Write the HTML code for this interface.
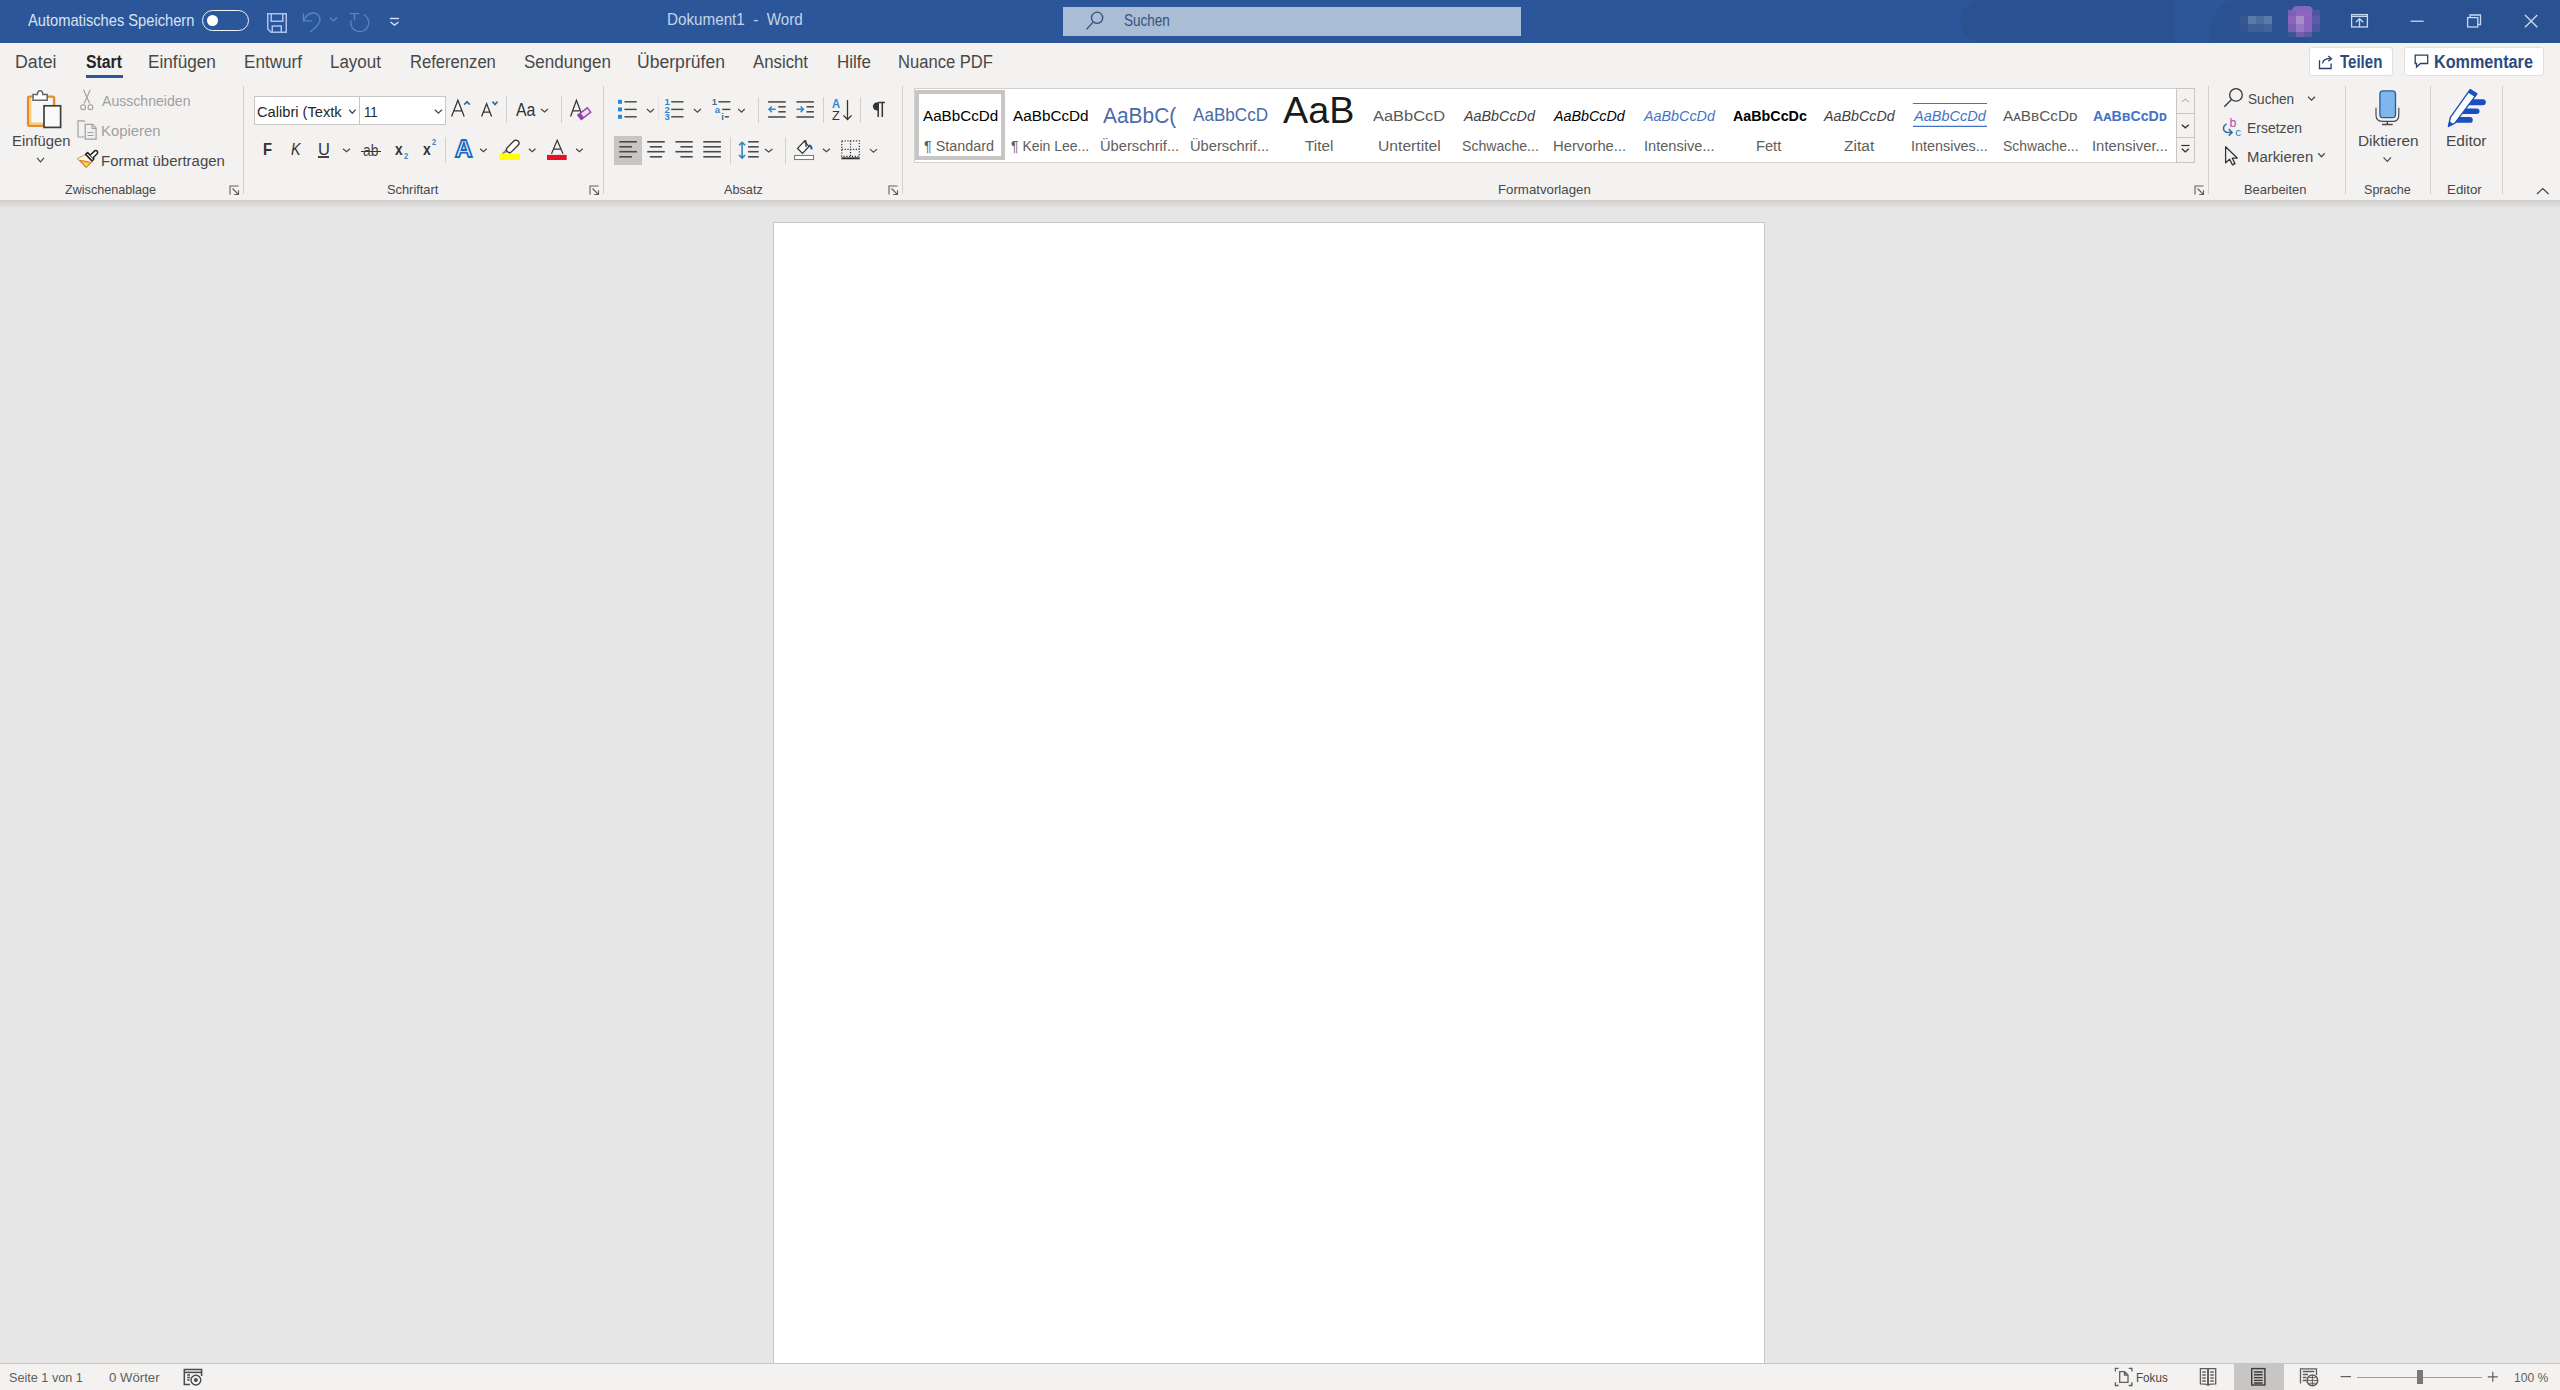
<!DOCTYPE html>
<html><head><meta charset="utf-8"><title>Dokument1 - Word</title>
<style>
html,body{margin:0;padding:0;}
body{width:2560px;height:1390px;overflow:hidden;position:relative;background:#E6E6E6;font-family:"Liberation Sans",sans-serif;}
.t{position:absolute;white-space:pre;line-height:1;}
svg{overflow:visible}
</style></head><body>
<div style="position:absolute;left:0px;top:0px;width:2560px;height:43px;background:#2B579A"></div>
<div style="position:absolute;left:1960px;top:0px;width:215px;height:43px;background:#2A4F88;border-radius:40px 0 0 40px;opacity:.55"></div>
<div style="position:absolute;left:2210px;top:0px;width:350px;height:43px;background:#2A4F88;border-radius:30px 0 0 0;opacity:.55"></div>
<div style="position:absolute;left:0px;top:43px;width:2560px;height:157px;background:#F3F2F1"></div>
<div style="position:absolute;left:0px;top:200px;width:2560px;height:8px;background:linear-gradient(#D0CECC,#E6E6E6)"></div>
<div style="position:absolute;left:773px;top:222px;width:992px;height:1200px;background:#fff;border:1px solid #C6C6C6;box-sizing:border-box"></div>
<div style="position:absolute;left:0px;top:1363px;width:2560px;height:1px;background:#C8C6C4"></div>
<div style="position:absolute;left:0px;top:1364px;width:2560px;height:26px;background:#F3F2F1"></div>
<div style="position:absolute;left:202px;top:10px;width:47px;height:21px;border:1.6px solid #F0F4FA;border-radius:11px;box-sizing:border-box"></div>
<div style="position:absolute;left:207px;top:15px;width:11px;height:11px;background:#FFFFFF;border-radius:50%"></div>
<svg style="position:absolute;left:266px;top:12px" width="22" height="22" viewBox="0 0 22 22"><g fill="none" stroke="#A9C3EE" stroke-width="1.5"><path d="M1.75 1.75H20.25V20.25H5L1.75 17Z"/><path d="M5.25 1.75V9.25H16.75V1.75"/><path d="M6.25 20.25V14H15.25V20.25"/></g></svg>
<svg style="position:absolute;left:300px;top:10px" width="24" height="26" viewBox="0 0 24 26"><g fill="none" stroke="#5A86C6" stroke-width="1.3"><path d="M3.5 3.5V10.8H11.5"/><path d="M4 10.3C6 5.5 10 3 13.5 3C17 3 20 5.8 20 9.5C20 13 17 17 10 22"/></g></svg>
<svg style="position:absolute;left:328px;top:15px" width="10" height="8" viewBox="0 0 10 8"><path d="M2 2.5L5.5 6L9 2.5" fill="none" stroke="#5A86C6" stroke-width="1.2"/></svg>
<svg style="position:absolute;left:348px;top:12px" width="24" height="24" viewBox="0 0 24 24"><g fill="none" stroke="#5A86C6" stroke-width="1.3"><path d="M15.5 2.5A9 9 0 1 1 3 8.5"/><path d="M1.7 1.7H11.2M6.5 1.7V8.3"/></g></svg>
<svg style="position:absolute;left:388px;top:16px" width="12" height="11" viewBox="0 0 12 11"><g fill="none" stroke="#D5E2F7" stroke-width="1.4"><path d="M1.9 2.5H10.9"/><path d="M2.5 6L6.5 9L10.5 6"/></g></svg>
<div style="position:absolute;left:1063px;top:7px;width:458px;height:29px;background:#A9BDD5"></div>
<svg style="position:absolute;left:1084px;top:10px" width="22" height="22" viewBox="0 0 22 22"><g fill="none" stroke="#2F4D7A" stroke-width="1.3"><circle cx="13.1" cy="7.8" r="5.6"/><path d="M8.9 12.4L2.5 19.4"/></g></svg>
<div style="position:absolute;left:2240px;top:16px;width:8px;height:8px;background:#36588F"></div>
<div style="position:absolute;left:2248px;top:16px;width:8px;height:8px;background:#5A7BA8"></div>
<div style="position:absolute;left:2256px;top:16px;width:8px;height:8px;background:#4E6D9E"></div>
<div style="position:absolute;left:2264px;top:16px;width:8px;height:8px;background:#5A7BA8"></div>
<div style="position:absolute;left:2240px;top:24px;width:8px;height:8px;background:#2F5690"></div>
<div style="position:absolute;left:2248px;top:24px;width:8px;height:8px;background:#40609A"></div>
<div style="position:absolute;left:2256px;top:24px;width:8px;height:8px;background:#3E5F94"></div>
<div style="position:absolute;left:2264px;top:24px;width:8px;height:8px;background:#40649A"></div>
<div style="position:absolute;left:2288px;top:10px;width:8px;height:6px;background:#7862B2"></div>
<div style="position:absolute;left:2296px;top:10px;width:8px;height:6px;background:#8E66C0"></div>
<div style="position:absolute;left:2304px;top:10px;width:8px;height:6px;background:#8E66C0"></div>
<div style="position:absolute;left:2312px;top:10px;width:8px;height:6px;background:#47589E"></div>
<div style="position:absolute;left:2288px;top:16px;width:8px;height:8px;background:#8C63BE"></div>
<div style="position:absolute;left:2296px;top:16px;width:8px;height:8px;background:#A78DCA"></div>
<div style="position:absolute;left:2304px;top:16px;width:8px;height:8px;background:#8C63BE"></div>
<div style="position:absolute;left:2312px;top:16px;width:8px;height:8px;background:#5E5CA6"></div>
<div style="position:absolute;left:2288px;top:24px;width:8px;height:8px;background:#7C60B6"></div>
<div style="position:absolute;left:2296px;top:24px;width:8px;height:8px;background:#9478C4"></div>
<div style="position:absolute;left:2304px;top:24px;width:8px;height:8px;background:#8A64BE"></div>
<div style="position:absolute;left:2312px;top:24px;width:8px;height:8px;background:#4E589E"></div>
<div style="position:absolute;left:2288px;top:32px;width:8px;height:5px;background:#3E5598"></div>
<div style="position:absolute;left:2296px;top:32px;width:8px;height:5px;background:#6E60AC"></div>
<div style="position:absolute;left:2304px;top:32px;width:8px;height:5px;background:#5A5CA2"></div>
<div style="position:absolute;left:2292px;top:6px;width:21px;height:5px;background:#8466BE;border-radius:10px 10px 0 0"></div>
<svg style="position:absolute;left:2350px;top:13px" width="20" height="16" viewBox="0 0 20 16"><g fill="none" stroke="#C9D8F0" stroke-width="1.3"><rect x="1.6" y="1.6" width="15.8" height="12.4"/><path d="M1.6 3.4H17.4"/><path d="M9.5 14V5.6M5.8 9.3L9.5 5.6L13.2 9.3"/></g></svg>
<svg style="position:absolute;left:2408px;top:18px" width="18" height="6" viewBox="0 0 18 6"><path d="M2.5 3.2H15.7" stroke="#C9D8F0" stroke-width="1.3"/></svg>
<svg style="position:absolute;left:2465px;top:13px" width="18" height="16" viewBox="0 0 18 16"><g fill="none" stroke="#C9D8F0" stroke-width="1.3"><rect x="2.6" y="4.6" width="10.2" height="9.4"/><path d="M5 4.6V2H15.5V11.5H12.8"/></g></svg>
<svg style="position:absolute;left:2523px;top:13px" width="17" height="17" viewBox="0 0 17 17"><path d="M2 2L14.3 14.3M14.3 2L2 14.3" stroke="#C9D8F0" stroke-width="1.4"/></svg>
<div style="position:absolute;left:86px;top:75px;width:37px;height:3px;background:#2B579A"></div>
<div style="position:absolute;left:2309px;top:47px;width:84px;height:29px;background:#fff;border:1px solid #E1DFDD;box-sizing:border-box;border-radius:3px"></div>
<div style="position:absolute;left:2404px;top:47px;width:140px;height:29px;background:#fff;border:1px solid #E1DFDD;box-sizing:border-box;border-radius:3px"></div>
<svg style="position:absolute;left:2317px;top:54px" width="18" height="18" viewBox="0 0 18 18"><g fill="none" stroke="#2B3F6A" stroke-width="1.3"><path d="M2.5 6.2V14.5H14.1V9.5"/><path d="M5.5 9.5C6 6 9 4.5 13.5 4.6"/><path d="M11.3 2L14.5 4.7L11.3 7.3"/></g></svg>
<svg style="position:absolute;left:2413px;top:53px" width="18" height="18" viewBox="0 0 18 18"><g fill="none" stroke="#2B3F6A" stroke-width="1.3"><path d="M2.2 2.2H14.7V10.5H7.5L3.5 14V10.5H2.2Z"/></g></svg>
<svg style="position:absolute;left:25px;top:88px" width="40" height="42" viewBox="0 0 40 42">
<rect x="3.1" y="8.6" width="26" height="29.2" rx="1.5" fill="#F7F7F7" stroke="#E8892A" stroke-width="2.4"/>
<path d="M5.4 10.5V35.6H27" fill="none" stroke="#F9C97A" stroke-width="2"/>
<path d="M8 12.2V6.6H12.4C12.4 4.3 13.6 2.7 15.1 2.7C16.6 2.7 17.8 4.3 17.8 6.6H22.2V12.2Z" fill="#FFFFFF" stroke="#666" stroke-width="1.5"/>
<rect x="19" y="17.8" width="16.6" height="21.6" fill="#FAFAFA" stroke="#3F3F3F" stroke-width="1.7"/>
</svg>
<svg style="position:absolute;left:35px;top:155px" width="11" height="8" viewBox="0 0 11 8"><path d="M2.00 2.80L5.50 6.80L9.00 2.80" fill="none" stroke="#484848" stroke-width="1.2"/></svg>
<svg style="position:absolute;left:78px;top:88px" width="18" height="24" viewBox="0 0 18 24"><g fill="none" stroke="#A19F9D" stroke-width="1.1"><path d="M5.5 1.7L11.7 15.5M12.3 1.7L6.1 15.5"/><circle cx="5.1" cy="19.2" r="2.4"/><circle cx="12.5" cy="19.2" r="2.4"/></g></svg>
<svg style="position:absolute;left:76px;top:119px" width="22" height="22" viewBox="0 0 22 22"><g fill="none" stroke="#A19F9D" stroke-width="1.2"><path d="M8.5 18H2V1.8H7.6L9 3.2"/><path d="M9.2 20.1V5.4H16.6L20.1 8.9V20.1Z" fill="#F0F0F0"/><path d="M16.2 5.4V9.3H20.1"/><path d="M11.5 13.5H17.5M11.5 16.5H17.5"/></g></svg>
<svg style="position:absolute;left:74px;top:146px" width="26" height="26" viewBox="0 0 26 26">
<path d="M11.6 8.6L3.3 12.7L12.2 21.6L18.4 15.3Z" fill="#FFF6E0" stroke="#C98A3A" stroke-width="0.9" stroke-linejoin="round"/>
<path d="M5.6 14.2C9 15 14 15.5 17.2 16.5L12.2 21.6Z" fill="#F6B73C" stroke="#E2761B" stroke-width="1"/>
<path d="M9 16.8L14.8 17.4L12.4 19.8Z" fill="#FFE066"/>
<path d="M11.6 8.4L13.6 6.6L19.9 12.9L18 14.9Z" fill="#fff" stroke="#222" stroke-width="1.5" stroke-linejoin="round"/>
<path d="M16.2 9.3L20.4 5.1C21.2 4.3 22.4 4.3 23.1 5.1C23.8 5.8 23.8 7 23.1 7.7L18.9 12" fill="#fff" stroke="#222" stroke-width="1.5" stroke-linejoin="round"/>
</svg>
<svg style="position:absolute;left:229px;top:185px" width="11" height="11" viewBox="0 0 11 11"><g fill="none" stroke="#605E5C" stroke-width="1.1"><path d="M1 9.5V1H9.5"/><path d="M3.5 3.5L9.5 9.5M5.2 9.5H9.5V5.2"/></g></svg>
<div style="position:absolute;left:243px;top:86px;width:1px;height:108px;background:#D2D0CE"></div>
<div style="position:absolute;left:254px;top:96px;width:106px;height:29px;background:#fff;border:1px solid #C8C6C4;box-sizing:border-box"></div>
<div style="position:absolute;left:359px;top:96px;width:87px;height:29px;background:#fff;border:1px solid #C8C6C4;box-sizing:border-box"></div>
<svg style="position:absolute;left:347px;top:107px" width="10" height="7" viewBox="0 0 10 7"><path d="M2.05 2.75L5.30 6.25L8.55 2.75" fill="none" stroke="#484848" stroke-width="1.2"/></svg>
<svg style="position:absolute;left:432px;top:107px" width="11" height="7" viewBox="0 0 11 7"><path d="M2.90 2.75L6.40 6.25L9.90 2.75" fill="none" stroke="#484848" stroke-width="1.2"/></svg>
<svg style="position:absolute;left:449px;top:98px" width="24" height="20" viewBox="0 0 24 20"><g fill="none" stroke="#333" stroke-width="1.25"><path d="M2.6 18.5L8.9 2.2L15.2 18.5M5 12.8H12.8"/></g><path d="M15.2 6.6L18 3.8L20.8 6.6" fill="none" stroke="#3E6E94" stroke-width="1.7"/></svg>
<svg style="position:absolute;left:479px;top:101px" width="22" height="17" viewBox="0 0 22 17"><g fill="none" stroke="#333" stroke-width="1.25"><path d="M2.6 15.5L7.6 2.8L12.6 15.5M4.5 11H10.7"/></g><path d="M13.4 0.6L16 3.4L18.6 0.6" fill="none" stroke="#3E6E94" stroke-width="1.7"/></svg>
<div style="position:absolute;left:506px;top:96px;width:1px;height:27px;background:#D2D0CE"></div>
<svg style="position:absolute;left:539px;top:107px" width="11" height="7" viewBox="0 0 11 7"><path d="M2.00 2.00L5.50 5.00L9.00 2.00" fill="none" stroke="#484848" stroke-width="1.2"/></svg>
<div style="position:absolute;left:561px;top:96px;width:1px;height:27px;background:#D2D0CE"></div>
<svg style="position:absolute;left:568px;top:98px" width="24" height="24" viewBox="0 0 24 24"><path d="M2.6 18.5L8.4 2.2L14 17M4.8 12.8H11.5" fill="none" stroke="#333" stroke-width="1.25"/><g transform="rotate(-38 16 15.8)"><rect x="10.3" y="13.1" width="12" height="5.6" fill="#F0DDF7" stroke="#8E44AD" stroke-width="1.4"/><rect x="10.3" y="13.1" width="3.4" height="5.6" fill="#8E44AD"/></g></svg>
<div style="position:absolute;left:318px;top:156px;width:11px;height:1.6px;background:#444"></div>
<svg style="position:absolute;left:341px;top:146px" width="11" height="7" viewBox="0 0 11 7"><path d="M2.00 2.80L5.50 5.80L9.00 2.80" fill="none" stroke="#484848" stroke-width="1.2"/></svg>
<div style="position:absolute;left:361px;top:151px;width:20px;height:1.3px;background:#333"></div>
<div style="position:absolute;left:445px;top:137px;width:1px;height:26px;background:#D2D0CE"></div>
<svg style="position:absolute;left:478px;top:146px" width="10" height="7" viewBox="0 0 10 7"><path d="M2.05 2.80L5.40 5.80L8.75 2.80" fill="none" stroke="#484848" stroke-width="1.2"/></svg>
<svg style="position:absolute;left:498px;top:138px" width="24" height="24" viewBox="0 0 24 24"><path d="M3.6 15.6L9.6 9.8L12.6 12.8L5.5 15.8Z" fill="#8A8886" /><g transform="rotate(45 14.6 8.5)"><rect x="11.6" y="0.8" width="6" height="15" rx="3" fill="#fff" stroke="#333" stroke-width="1.3"/></g><rect x="1.8" y="16" width="20.2" height="6" fill="#FFFF00"/></svg>
<svg style="position:absolute;left:526px;top:146px" width="10" height="7" viewBox="0 0 10 7"><path d="M2.85 2.80L6.20 5.80L9.55 2.80" fill="none" stroke="#484848" stroke-width="1.2"/></svg>
<svg style="position:absolute;left:545px;top:138px" width="24" height="24" viewBox="0 0 24 24"><path d="M6.5 15.7L12.2 2.2L18 15.7M8.5 11.2H16" fill="none" stroke="#333" stroke-width="1.2"/><rect x="2" y="16.9" width="19.7" height="5.1" fill="#E81123"/></svg>
<svg style="position:absolute;left:574px;top:146px" width="10" height="7" viewBox="0 0 10 7"><path d="M2.05 2.80L5.40 5.80L8.75 2.80" fill="none" stroke="#484848" stroke-width="1.2"/></svg>
<svg style="position:absolute;left:589px;top:185px" width="11" height="11" viewBox="0 0 11 11"><g fill="none" stroke="#605E5C" stroke-width="1.1"><path d="M1 9.5V1H9.5"/><path d="M3.5 3.5L9.5 9.5M5.2 9.5H9.5V5.2"/></g></svg>
<div style="position:absolute;left:603px;top:86px;width:1px;height:108px;background:#D2D0CE"></div>
<svg style="position:absolute;left:0px;top:0px" width="2560" height="200" viewBox="0 0 2560 200"><rect x="618" y="99.8" width="4" height="4" fill="#1E88E5"/><rect x="618" y="107.4" width="4" height="4" fill="#1E88E5"/><rect x="618" y="114.8" width="4" height="4" fill="#1E88E5"/><g stroke="#444" stroke-width="1.4" fill="none"><path d="M624.4 101.8H636.7"/><path d="M624.4 109.4H636.7"/><path d="M624.4 116.8H636.7"/></g></svg>
<svg style="position:absolute;left:644px;top:107px" width="11" height="7" viewBox="0 0 11 7"><path d="M2.90 2.00L6.40 5.20L9.90 2.00" fill="none" stroke="#484848" stroke-width="1.2"/></svg>
<div style="position:absolute;left:658px;top:98px;width:1px;height:23px;background:#E6E4E2"></div>
<svg style="position:absolute;left:0px;top:0px" width="2560" height="200" viewBox="0 0 2560 200"><g stroke="#444" stroke-width="1.4" fill="none"><path d="M671.2 101.8H683.5"/><path d="M671.2 109.4H683.5"/><path d="M671.2 116.8H683.5"/></g><text x="664.5" y="105.39999999999999" font-family="Liberation Sans" font-size="9.5" font-weight="bold" fill="#2E86C9">1</text><text x="664.5" y="113.0" font-family="Liberation Sans" font-size="9.5" font-weight="bold" fill="#2E86C9">2</text><text x="664.5" y="120.39999999999999" font-family="Liberation Sans" font-size="9.5" font-weight="bold" fill="#2E86C9">3</text></svg>
<svg style="position:absolute;left:691px;top:107px" width="11" height="7" viewBox="0 0 11 7"><path d="M2.90 2.00L6.40 5.20L9.90 2.00" fill="none" stroke="#484848" stroke-width="1.2"/></svg>
<svg style="position:absolute;left:0px;top:0px" width="2560" height="200" viewBox="0 0 2560 200"><g stroke="#444" stroke-width="1.4" fill="none"><path d="M718.4 101.8H730.4"/><path d="M722.2 109.4H730.4"/><path d="M724.8 116.8H728.9"/></g><text x="711.8" y="105.4" font-family="Liberation Sans" font-size="9.5" font-weight="bold" fill="#3F6F8F">1</text><text x="714.8" y="113" font-family="Liberation Sans" font-size="9.5" font-weight="bold" fill="#2E86C9">a</text><text x="721.2" y="120.4" font-family="Liberation Sans" font-size="9.5" font-weight="bold" fill="#3F6F8F">i</text></svg>
<svg style="position:absolute;left:736px;top:107px" width="10" height="7" viewBox="0 0 10 7"><path d="M2.25 2.00L5.50 5.20L8.75 2.00" fill="none" stroke="#484848" stroke-width="1.2"/></svg>
<div style="position:absolute;left:758px;top:97px;width:1px;height:26px;background:#D2D0CE"></div>
<svg style="position:absolute;left:0px;top:0px" width="2560" height="200" viewBox="0 0 2560 200"><g stroke="#444" stroke-width="1.5" fill="none"><path d="M768.1 101.9H785.7"/><path d="M778.3 106.8H785.7"/><path d="M778.3 111.8H785.7"/><path d="M768.1 117H785.7"/></g><g stroke="#2B88D8" stroke-width="1.5" fill="none"><path d="M769 109.3H775.6M771.8 106.5L769 109.3L771.8 112.1"/></g></svg>
<svg style="position:absolute;left:0px;top:0px" width="2560" height="200" viewBox="0 0 2560 200"><g stroke="#444" stroke-width="1.5" fill="none"><path d="M796.4 101.9H813.9"/><path d="M806.5 106.8H813.9"/><path d="M806.5 111.8H813.9"/><path d="M796.4 117H813.9"/></g><g stroke="#2B88D8" stroke-width="1.5" fill="none"><path d="M796.5 109.3H803.4M800.6 106.5L803.4 109.3L800.6 112.1"/></g></svg>
<div style="position:absolute;left:823px;top:97px;width:1px;height:26px;background:#D2D0CE"></div>
<svg style="position:absolute;left:0px;top:0px" width="2560" height="200" viewBox="0 0 2560 200"><g stroke="#333" stroke-width="1.3" fill="none"><path d="M847.5 100V119.3M843.4 115.4L847.5 119.5L851.6 115.4"/></g></svg>
<div style="position:absolute;left:860px;top:97px;width:1px;height:26px;background:#D2D0CE"></div>
<svg style="position:absolute;left:0px;top:0px" width="2560" height="200" viewBox="0 0 2560 200"><path d="M878.5 102.6H884.8M878.2 102.6V117M882.3 102.6V117" stroke="#333" stroke-width="1.5" fill="none"/><path d="M878.5 102.3C874.5 102.3 872.9 104.4 872.9 106.6C872.9 108.9 874.7 110.7 878.5 110.7Z" fill="#333"/></svg>
<div style="position:absolute;left:614px;top:136px;width:28px;height:28.5px;background:#C8C6C4"></div>
<svg style="position:absolute;left:0px;top:0px" width="2560" height="200" viewBox="0 0 2560 200"><g stroke="#4A4A4A" stroke-width="1.6" fill="none"><path d="M619.3 141.8H636.9"/><path d="M619.3 146.8H631.9"/><path d="M619.3 151.7H636.9"/><path d="M619.3 156.8H631.9"/></g><g stroke="#4A4A4A" stroke-width="1.6" fill="none"><path d="M647.2 141.8H664.8"/><path d="M649.8 146.8H662.1"/><path d="M647.2 151.7H664.8"/><path d="M649.8 156.8H662.1"/></g><g stroke="#4A4A4A" stroke-width="1.6" fill="none"><path d="M675.4 141.8H692.7"/><path d="M680.4 146.8H692.7"/><path d="M675.4 151.7H692.7"/><path d="M680.4 156.8H692.7"/></g><g stroke="#4A4A4A" stroke-width="1.6" fill="none"><path d="M703.3 141.8H720.9"/><path d="M703.3 146.8H720.9"/><path d="M703.3 151.7H720.9"/><path d="M703.3 156.8H720.9"/></g></svg>
<div style="position:absolute;left:730px;top:137px;width:1px;height:27px;background:#D2D0CE"></div>
<svg style="position:absolute;left:0px;top:0px" width="2560" height="200" viewBox="0 0 2560 200"><g stroke="#4A4A4A" stroke-width="1.6" fill="none"><path d="M748.1 141.8H758.7"/><path d="M748.1 146.8H758.7"/><path d="M748.1 151.7H758.7"/><path d="M748.1 156.8H758.7"/></g><g stroke="#2E86B8" stroke-width="1.6" fill="none"><path d="M742.1 142.5V157.8M739.1 145.3L742.1 142.3L745.1 145.3M739.1 155L742.1 158L745.1 155"/></g></svg>
<svg style="position:absolute;left:762px;top:147px" width="11" height="7" viewBox="0 0 11 7"><path d="M2.95 2.00L6.70 5.00L10.45 2.00" fill="none" stroke="#484848" stroke-width="1.2"/></svg>
<div style="position:absolute;left:785px;top:137px;width:1px;height:27px;background:#D2D0CE"></div>
<svg style="position:absolute;left:0px;top:0px" width="2560" height="200" viewBox="0 0 2560 200"><path d="M797.6 148.4L804.2 141.4L809 146.4L802.5 153.4Z" fill="#fff" stroke="#333" stroke-width="1.3"/><path d="M804 141.6C805 140.2 806 140.5 806 142V147" fill="none" stroke="#333" stroke-width="1.3"/><path d="M809 145.5C810.5 145.5 811.6 146.5 811.6 149.5" fill="none" stroke="#1F5F9A" stroke-width="2"/><rect x="794.6" y="155.4" width="19" height="4.2" fill="#fff" stroke="#666" stroke-width="0.9"/></svg>
<svg style="position:absolute;left:820px;top:146px" width="11" height="7" viewBox="0 0 11 7"><path d="M2.90 2.80L6.40 5.80L9.90 2.80" fill="none" stroke="#484848" stroke-width="1.2"/></svg>
<svg style="position:absolute;left:0px;top:0px" width="2560" height="200" viewBox="0 0 2560 200"><g stroke="#333" stroke-width="1.2" stroke-dasharray="1.2 1.6" fill="none"><rect x="841.8" y="140.8" width="17.5" height="15.5"/><path d="M850.5 140.8V156.3M841.8 149.3H859.3"/></g><path d="M841.4 158.3H859.7" stroke="#333" stroke-width="2"/></svg>
<svg style="position:absolute;left:868px;top:147px" width="11" height="7" viewBox="0 0 11 7"><path d="M2.00 2.10L5.50 5.10L9.00 2.10" fill="none" stroke="#484848" stroke-width="1.2"/></svg>
<svg style="position:absolute;left:888px;top:185px" width="11" height="11" viewBox="0 0 11 11"><g fill="none" stroke="#605E5C" stroke-width="1.1"><path d="M1 9.5V1H9.5"/><path d="M3.5 3.5L9.5 9.5M5.2 9.5H9.5V5.2"/></g></svg>
<div style="position:absolute;left:902px;top:86px;width:1px;height:108px;background:#D2D0CE"></div>
<div style="position:absolute;left:914px;top:88px;width:1263px;height:75px;background:#fff;border:1px solid #D2D0CE;border-right:none;box-sizing:border-box"></div>
<div style="position:absolute;left:914.5px;top:90.3px;width:90px;height:69.4px;border:4.5px solid #C8C6C4;box-sizing:border-box"></div>
<div style="position:absolute;left:2176px;top:88px;width:19px;height:26px;background:#F3F2F1;border:1px solid #C8C6C4;box-sizing:border-box"></div>
<div style="position:absolute;left:2176px;top:113px;width:19px;height:25px;background:#F3F2F1;border:1px solid #C8C6C4;box-sizing:border-box"></div>
<div style="position:absolute;left:2176px;top:137px;width:19px;height:26px;background:#F3F2F1;border:1px solid #C8C6C4;box-sizing:border-box"></div>
<svg style="position:absolute;left:0px;top:0px" width="2560" height="200" viewBox="0 0 2560 200"><path d="M2181.7 101.9L2185.3 99.1L2188.9 101.9" fill="none" stroke="#B3B0AD" stroke-width="1.1"/></svg>
<svg style="position:absolute;left:2179px;top:122px" width="11" height="7" viewBox="0 0 11 7"><path d="M2.80 2.80L6.30 5.80L9.80 2.80" fill="none" stroke="#333" stroke-width="1.4"/></svg>
<svg style="position:absolute;left:0px;top:0px" width="2560" height="200" viewBox="0 0 2560 200"><path d="M2181.3 145.5H2189.6" stroke="#333" stroke-width="1.2"/></svg>
<svg style="position:absolute;left:2179px;top:146px" width="11" height="7" viewBox="0 0 11 7"><path d="M2.80 2.70L6.30 5.90L9.80 2.70" fill="none" stroke="#333" stroke-width="1.4"/></svg>
<svg style="position:absolute;left:0px;top:0px" width="2560" height="200" viewBox="0 0 2560 200"><path d="M1912.9 103.5H1987M1912.9 126.4H1987" stroke="#4472C4" stroke-width="1.1"/></svg>
<svg style="position:absolute;left:2194px;top:185px" width="11" height="11" viewBox="0 0 11 11"><g fill="none" stroke="#605E5C" stroke-width="1.1"><path d="M1 9.5V1H9.5"/><path d="M3.5 3.5L9.5 9.5M5.2 9.5H9.5V5.2"/></g></svg>
<div style="position:absolute;left:2208px;top:86px;width:1px;height:108px;background:#D2D0CE"></div>
<svg style="position:absolute;left:2220px;top:85px" width="26" height="26" viewBox="0 0 26 26"><g fill="none" stroke="#333" stroke-width="1.3"><circle cx="16" cy="9.9" r="6.3"/><path d="M11.5 14.5L4.3 21.8"/></g></svg>
<svg style="position:absolute;left:2306px;top:94px" width="11" height="7" viewBox="0 0 11 7"><path d="M2.00 2.75L5.50 6.25L9.00 2.75" fill="none" stroke="#484848" stroke-width="1.2"/></svg>
<svg style="position:absolute;left:2220px;top:114px" width="26" height="26" viewBox="0 0 26 26"><text x="9.6" y="12.9" font-family="Liberation Sans" font-size="12.3" fill="#9B4FB5">b</text><text x="15.2" y="22.4" font-family="Liberation Sans" font-size="11.5" fill="#2E7EB8">c</text><g fill="none" stroke="#2C6DA6" stroke-width="1.5"><path d="M6.6 9.8C4.3 11 3.3 13.3 3.6 15.3C4 17.3 5.8 18.4 8.5 18.4H12"/><path d="M8.8 15.1L12.1 18.4L8.8 21.7"/></g></svg>
<svg style="position:absolute;left:2222px;top:144px" width="22" height="24" viewBox="0 0 22 24"><path d="M3.6 2.8V18.9L7.6 15.2L10.5 20.9L13 19.6L10.2 14H15.2Z" fill="none" stroke="#333" stroke-width="1.25" stroke-linejoin="round"/></svg>
<svg style="position:absolute;left:2316px;top:151px" width="10" height="7" viewBox="0 0 10 7"><path d="M2.25 2.25L5.50 5.75L8.75 2.25" fill="none" stroke="#484848" stroke-width="1.2"/></svg>
<div style="position:absolute;left:2345px;top:86px;width:1px;height:108px;background:#D2D0CE"></div>
<svg style="position:absolute;left:2372px;top:86px" width="32" height="42" viewBox="0 0 32 42"><rect x="7.9" y="4.9" width="15.6" height="26.8" rx="3.2" fill="#7FB6EB" stroke="#1F5F9F" stroke-width="1.3"/><path d="M4 21.8V29C4 33 6 35.3 10 35.3H21.5C25.5 35.3 26.8 33 26.8 29V21.8" fill="none" stroke="#4A4A4A" stroke-width="1.2"/><path d="M15.3 35.3V38.6M10 38.6H20.7" fill="none" stroke="#4A4A4A" stroke-width="1.5"/></svg>
<svg style="position:absolute;left:2381px;top:155px" width="11" height="8" viewBox="0 0 11 8"><path d="M2.55 2.30L6.30 6.30L10.05 2.30" fill="none" stroke="#484848" stroke-width="1.2"/></svg>
<div style="position:absolute;left:2430px;top:86px;width:1px;height:108px;background:#D2D0CE"></div>
<svg style="position:absolute;left:2442px;top:84px" width="50" height="46" viewBox="0 0 50 46">
<g fill="#1A4FC4"><rect x="24" y="15.2" width="19.8" height="6" rx="3"/><rect x="17" y="24.4" width="20.5" height="5.5" rx="2.75"/><rect x="10" y="33" width="20.8" height="5.8" rx="2.9"/></g>
<path d="M6.4 42.5L8.4 33.4L28.1 5.6L34.9 9.8L12.9 39.1Z" fill="#fff" stroke="#1A4FC4" stroke-width="1.4" stroke-linejoin="round"/>
<path d="M28.1 5.2L35.3 9.6L33.1 12.9L25.9 8.4Z" fill="#1A4FC4"/>
<path d="M6 43L7.3 37L11.6 40.2Z" fill="#1A4FC4"/>
</svg>
<div style="position:absolute;left:2502px;top:86px;width:1px;height:108px;background:#D2D0CE"></div>
<svg style="position:absolute;left:2534px;top:186px" width="18" height="10" viewBox="0 0 18 10"><path d="M3 8L8.8 2.5L14.6 8" fill="none" stroke="#444" stroke-width="1.2"/></svg>
<svg style="position:absolute;left:182px;top:1367px" width="22" height="22" viewBox="0 0 22 22"><g fill="none" stroke="#4A4A4A" stroke-width="1.5"><path d="M8 17.4H2.3V2.4H19.6V9"/><path d="M2.3 5.4H19.6"/><path d="M5.2 8H8M5.2 10.6H8M5.2 13H7.5"/></g><circle cx="13.9" cy="13.1" r="4.9" fill="#F3F2F1" stroke="#4A4A4A" stroke-width="1.4"/><circle cx="13.9" cy="13.1" r="2" fill="#4A4A4A"/></svg>
<svg style="position:absolute;left:2112px;top:1366px" width="24" height="22" viewBox="0 0 24 22"><g fill="none" stroke="#605E5C" stroke-width="1.3"><path d="M3.4 5.5V2.3H6.6M16.7 2.3H19.9V5.5M19.9 16.3V19.5H16.7M6.6 19.5H3.4V16.3"/><path d="M7.7 5.7V16.3H16V9L12.7 5.7Z M12.5 5.7V9.2H16"/></g></svg>
<svg style="position:absolute;left:2197px;top:1366px" width="22" height="22" viewBox="0 0 22 22"><g fill="none" stroke="#605E5C" stroke-width="1.3"><path d="M3.4 2.7H10.7V19C9 17.8 5 17.8 3.4 17.8Z"/><path d="M18.7 2.7H11.4V19C13 17.8 17 17.8 18.7 17.8Z"/><path d="M5.3 6H8.8M5.3 9H8.8M5.3 12H8.8M5.3 15H8.8M13.3 6H16.8M13.3 9H16.8M13.3 12H16.8M13.3 15H16.8"/></g></svg>
<div style="position:absolute;left:2234px;top:1364px;width:50px;height:26px;background:#C8C6C4"></div>
<svg style="position:absolute;left:2248px;top:1366px" width="22" height="22" viewBox="0 0 22 22"><g fill="none" stroke="#3B3A39" stroke-width="1.4"><rect x="3.7" y="2.6" width="13.2" height="16.4"/><path d="M6 6H14.6M6 8.8H14.6M6 11.6H14.6M6 14.4H14.6M6 17H14.6"/></g></svg>
<svg style="position:absolute;left:2298px;top:1366px" width="22" height="22" viewBox="0 0 22 22"><g fill="none" stroke="#605E5C" stroke-width="1.3"><path d="M2.5 17.6V2.8H18.5V9"/><path d="M4.8 5.5H16.3M4.8 8.5H10M4.8 11.5H8.5M4.8 14.5H8.5"/></g><circle cx="14.4" cy="14.4" r="5.3" fill="#F3F2F1" stroke="#605E5C" stroke-width="1.5"/><path d="M14.4 9.1V19.7M9.1 14.4H19.7M11.3 11.6H17.5M11.3 17.2H17.5" stroke="#605E5C" stroke-width="1"/></svg>
<svg style="position:absolute;left:2338px;top:1370px" width="16" height="14" viewBox="0 0 16 14"><path d="M2.6 6.6H13" stroke="#605E5C" stroke-width="1.2"/></svg>
<div style="position:absolute;left:2357px;top:1377px;width:125px;height:1px;background:#A19F9D"></div>
<div style="position:absolute;left:2416.5px;top:1370px;width:6.5px;height:14px;background:#7A7877"></div>
<svg style="position:absolute;left:2485px;top:1369px" width="16" height="16" viewBox="0 0 16 16"><path d="M2.8 7.8H12.8M7.8 2.8V12.8" stroke="#605E5C" stroke-width="1.2"/></svg>
<div class="t" style="left:28.00px;top:11.61px;font-size:17px;color:#D9E2F0;font-weight:normal;font-style:normal;font-family:'Liberation Sans',sans-serif;transform:scaleX(0.8632);transform-origin:0 0;">Automatisches Speichern</div>
<div class="t" style="left:667.11px;top:11.11px;font-size:17px;color:#C5D3E8;font-weight:normal;font-style:normal;font-family:'Liberation Sans',sans-serif;transform:scaleX(0.8946);transform-origin:0 0;">Dokument1  -  Word</div>
<div class="t" style="left:1123.50px;top:12.41px;font-size:17px;color:#34527F;font-weight:normal;font-style:normal;font-family:'Liberation Sans',sans-serif;transform:scaleX(0.7954);transform-origin:0 0;">Suchen</div>
<div class="t" style="left:15.01px;top:52.76px;font-size:18px;color:#484848;font-weight:normal;font-style:normal;font-family:'Liberation Sans',sans-serif;transform:scaleX(0.9870);transform-origin:0 0;">Datei</div>
<div class="t" style="left:86.00px;top:52.76px;font-size:18px;color:#262626;font-weight:bold;font-style:normal;font-family:'Liberation Sans',sans-serif;transform:scaleX(0.8777);transform-origin:0 0;">Start</div>
<div class="t" style="left:148.04px;top:52.76px;font-size:18px;color:#484848;font-weight:normal;font-style:normal;font-family:'Liberation Sans',sans-serif;transform:scaleX(0.9558);transform-origin:0 0;">Einfügen</div>
<div class="t" style="left:244.05px;top:52.76px;font-size:18px;color:#484848;font-weight:normal;font-style:normal;font-family:'Liberation Sans',sans-serif;transform:scaleX(0.9505);transform-origin:0 0;">Entwurf</div>
<div class="t" style="left:330.06px;top:52.76px;font-size:18px;color:#484848;font-weight:normal;font-style:normal;font-family:'Liberation Sans',sans-serif;transform:scaleX(0.9426);transform-origin:0 0;">Layout</div>
<div class="t" style="left:410.08px;top:52.76px;font-size:18px;color:#484848;font-weight:normal;font-style:normal;font-family:'Liberation Sans',sans-serif;transform:scaleX(0.9226);transform-origin:0 0;">Referenzen</div>
<div class="t" style="left:524.00px;top:52.76px;font-size:18px;color:#484848;font-weight:normal;font-style:normal;font-family:'Liberation Sans',sans-serif;transform:scaleX(0.9442);transform-origin:0 0;">Sendungen</div>
<div class="t" style="left:637.02px;top:52.76px;font-size:18px;color:#484848;font-weight:normal;font-style:normal;font-family:'Liberation Sans',sans-serif;transform:scaleX(0.9768);transform-origin:0 0;">Überprüfen</div>
<div class="t" style="left:753.00px;top:52.76px;font-size:18px;color:#484848;font-weight:normal;font-style:normal;font-family:'Liberation Sans',sans-serif;transform:scaleX(0.9318);transform-origin:0 0;">Ansicht</div>
<div class="t" style="left:836.56px;top:52.76px;font-size:18px;color:#484848;font-weight:normal;font-style:normal;font-family:'Liberation Sans',sans-serif;transform:scaleX(0.9429);transform-origin:0 0;">Hilfe</div>
<div class="t" style="left:898.08px;top:52.76px;font-size:18px;color:#484848;font-weight:normal;font-style:normal;font-family:'Liberation Sans',sans-serif;transform:scaleX(0.9211);transform-origin:0 0;">Nuance PDF</div>
<div class="t" style="left:2339.50px;top:52.76px;font-size:18px;color:#2C4A7E;font-weight:bold;font-style:normal;font-family:'Liberation Sans',sans-serif;transform:scaleX(0.8353);transform-origin:0 0;">Teilen</div>
<div class="t" style="left:2433.60px;top:52.76px;font-size:18px;color:#2C4A7E;font-weight:bold;font-style:normal;font-family:'Liberation Sans',sans-serif;transform:scaleX(0.8989);transform-origin:0 0;">Kommentare</div>
<div class="t" style="left:11.53px;top:132.65px;font-size:15.3px;color:#484848;font-weight:normal;font-style:normal;font-family:'Liberation Sans',sans-serif;transform:scaleX(0.9681);transform-origin:0 0;">Einfügen</div>
<div class="t" style="left:102.00px;top:92.65px;font-size:15.3px;color:#A19F9D;font-weight:normal;font-style:normal;font-family:'Liberation Sans',sans-serif;transform:scaleX(0.9206);transform-origin:0 0;">Ausschneiden</div>
<div class="t" style="left:101.03px;top:122.65px;font-size:15.3px;color:#A19F9D;font-weight:normal;font-style:normal;font-family:'Liberation Sans',sans-serif;transform:scaleX(0.9711);transform-origin:0 0;">Kopieren</div>
<div class="t" style="left:101.02px;top:152.65px;font-size:15.3px;color:#484848;font-weight:normal;font-style:normal;font-family:'Liberation Sans',sans-serif;transform:scaleX(0.9778);transform-origin:0 0;">Format übertragen</div>
<div class="t" style="left:65.00px;top:183.56px;font-size:12.8px;color:#484848;font-weight:normal;font-style:normal;font-family:'Liberation Sans',sans-serif;transform:scaleX(0.9853);transform-origin:0 0;">Zwischenablage</div>
<div class="t" style="left:257.00px;top:103.55px;font-size:15.3px;color:#262626;font-weight:normal;font-style:normal;font-family:'Liberation Sans',sans-serif;transform:scaleX(0.9578);transform-origin:0 0;">Calibri (Textk</div>
<div class="t" style="left:363.74px;top:103.55px;font-size:15.3px;color:#262626;font-weight:normal;font-style:normal;font-family:'Liberation Sans',sans-serif;transform:scaleX(0.8628);transform-origin:0 0;">11</div>
<div class="t" style="left:515.50px;top:101.69px;font-size:17.5px;color:#333;font-weight:normal;font-style:normal;font-family:'Liberation Sans',sans-serif;transform:scaleX(0.9090);transform-origin:0 0;">Aa</div>
<div class="t" style="left:263.03px;top:141.01px;font-size:17px;color:#333;font-weight:bold;font-style:normal;font-family:'Liberation Sans',sans-serif;transform:scaleX(0.8667);transform-origin:0 0;">F</div>
<div class="t" style="left:290.60px;top:141.01px;font-size:17px;color:#333;font-weight:normal;font-style:italic;font-family:'Liberation Sans',sans-serif;transform:scaleX(0.8417);transform-origin:0 0;">K</div>
<div class="t" style="left:317.83px;top:141.01px;font-size:17px;color:#333;font-weight:normal;font-style:normal;font-family:'Liberation Sans',sans-serif;transform:scaleX(0.9700);transform-origin:0 0;">U</div>
<div class="t" style="left:363.20px;top:142.10px;font-size:16.3px;color:#444;font-weight:normal;font-style:normal;font-family:'Liberation Sans',sans-serif;transform:scaleX(0.8530);transform-origin:0 0;">ab</div>
<div class="t" style="left:395.00px;top:141.76px;font-size:16px;color:#333;font-weight:bold;font-style:normal;font-family:'Liberation Sans',sans-serif;transform:scaleX(0.8556);transform-origin:0 0;">x</div>
<div class="t" style="left:403.90px;top:151.98px;font-size:9px;color:#3D85C6;font-weight:bold;font-style:normal;font-family:'Liberation Sans',sans-serif;transform:scaleX(0.8200);transform-origin:0 0;">2</div>
<div class="t" style="left:423.20px;top:141.76px;font-size:16px;color:#333;font-weight:bold;font-style:normal;font-family:'Liberation Sans',sans-serif;transform:scaleX(0.8667);transform-origin:0 0;">x</div>
<div class="t" style="left:432.00px;top:138.38px;font-size:9px;color:#3D85C6;font-weight:bold;font-style:normal;font-family:'Liberation Sans',sans-serif;transform:scaleX(0.8200);transform-origin:0 0;">2</div>
<div class="t" style="left:455.30px;top:137.46px;font-size:24.5px;color:#ffffff;font-weight:bold;font-style:normal;font-family:'Liberation Sans',sans-serif;transform:scaleX(0.9889);transform-origin:0 0;-webkit-text-stroke:1.8px #1C6BC0;text-shadow:0 0 2px #A8D4FF;">A</div>
<div class="t" style="left:387.40px;top:184.06px;font-size:12.8px;color:#484848;font-weight:normal;font-style:normal;font-family:'Liberation Sans',sans-serif;transform:scaleX(1.0030);transform-origin:0 0;">Schriftart</div>
<div class="t" style="left:832.20px;top:98.34px;font-size:12px;color:#2B88D8;font-weight:bold;font-style:normal;font-family:'Liberation Sans',sans-serif;transform:scaleX(0.9333);transform-origin:0 0;">A</div>
<div class="t" style="left:832.20px;top:109.54px;font-size:12px;color:#333;font-weight:normal;font-style:normal;font-family:'Liberation Sans',sans-serif;transform:scaleX(1.0571);transform-origin:0 0;">Z</div>
<div class="t" style="left:723.50px;top:183.56px;font-size:12.8px;color:#484848;font-weight:normal;font-style:normal;font-family:'Liberation Sans',sans-serif;transform:scaleX(0.9917);transform-origin:0 0;">Absatz</div>
<div class="t" style="left:922.90px;top:107.78px;font-size:15.5px;color:#000;font-weight:normal;font-style:normal;font-family:'Liberation Sans',sans-serif;transform:scaleX(0.9809);transform-origin:0 0;">AaBbCcDd</div>
<div class="t" style="left:924.40px;top:137.95px;font-size:15.3px;color:#605E5C;font-weight:normal;font-style:normal;font-family:'Liberation Sans',sans-serif;transform:scaleX(0.9400);transform-origin:0 0;">¶ Standard</div>
<div class="t" style="left:1012.50px;top:107.78px;font-size:15.5px;color:#000;font-weight:normal;font-style:normal;font-family:'Liberation Sans',sans-serif;transform:scaleX(0.9861);transform-origin:0 0;">AaBbCcDd</div>
<div class="t" style="left:1011.00px;top:137.95px;font-size:15.3px;color:#605E5C;font-weight:normal;font-style:normal;font-family:'Liberation Sans',sans-serif;transform:scaleX(0.9128);transform-origin:0 0;">¶ Kein Lee...</div>
<div class="t" style="left:1103.00px;top:105.80px;font-size:21.5px;color:#4A6AA8;font-weight:normal;font-style:normal;font-family:'Liberation Sans',sans-serif;transform:scaleX(0.9721);transform-origin:0 0;">AaBbC(</div>
<div class="t" style="left:1100.04px;top:137.95px;font-size:15.3px;color:#605E5C;font-weight:normal;font-style:normal;font-family:'Liberation Sans',sans-serif;transform:scaleX(0.9601);transform-origin:0 0;">Überschrif...</div>
<div class="t" style="left:1192.50px;top:106.79px;font-size:17.5px;color:#4A6AA8;font-weight:normal;font-style:normal;font-family:'Liberation Sans',sans-serif;transform:scaleX(0.9777);transform-origin:0 0;">AaBbCcD</div>
<div class="t" style="left:1190.04px;top:137.95px;font-size:15.3px;color:#605E5C;font-weight:normal;font-style:normal;font-family:'Liberation Sans',sans-serif;transform:scaleX(0.9601);transform-origin:0 0;">Überschrif...</div>
<div class="t" style="left:1282.50px;top:92.26px;font-size:37.5px;color:#1a1a1a;font-weight:normal;font-style:normal;font-family:'Liberation Sans',sans-serif;transform:scaleX(1.0062);transform-origin:0 0;">AaB</div>
<div class="t" style="left:1305.00px;top:137.95px;font-size:15.3px;color:#605E5C;font-weight:normal;font-style:normal;font-family:'Liberation Sans',sans-serif;">Titel</div>
<div class="t" style="left:1372.75px;top:107.78px;font-size:15.5px;color:#595959;font-weight:normal;font-style:normal;font-family:'Liberation Sans',sans-serif;transform:scaleX(1.0610);transform-origin:0 0;">AaBbCcD</div>
<div class="t" style="left:1378.28px;top:137.95px;font-size:15.3px;color:#605E5C;font-weight:normal;font-style:normal;font-family:'Liberation Sans',sans-serif;transform:scaleX(1.0249);transform-origin:0 0;">Untertitel</div>
<div class="t" style="left:1463.67px;top:107.78px;font-size:15.5px;color:#404040;font-weight:normal;font-style:italic;font-family:'Liberation Sans',sans-serif;transform:scaleX(0.9247);transform-origin:0 0;">AaBbCcDd</div>
<div class="t" style="left:1462.00px;top:137.95px;font-size:15.3px;color:#605E5C;font-weight:normal;font-style:normal;font-family:'Liberation Sans',sans-serif;transform:scaleX(0.9223);transform-origin:0 0;">Schwache...</div>
<div class="t" style="left:1553.92px;top:107.78px;font-size:15.5px;color:#000;font-weight:normal;font-style:italic;font-family:'Liberation Sans',sans-serif;transform:scaleX(0.9234);transform-origin:0 0;">AaBbCcDd</div>
<div class="t" style="left:1553.03px;top:137.95px;font-size:15.3px;color:#605E5C;font-weight:normal;font-style:normal;font-family:'Liberation Sans',sans-serif;transform:scaleX(0.9671);transform-origin:0 0;">Hervorhe...</div>
<div class="t" style="left:1643.67px;top:107.78px;font-size:15.5px;color:#4472C4;font-weight:normal;font-style:italic;font-family:'Liberation Sans',sans-serif;transform:scaleX(0.9247);transform-origin:0 0;">AaBbCcDd</div>
<div class="t" style="left:1644.04px;top:137.95px;font-size:15.3px;color:#605E5C;font-weight:normal;font-style:normal;font-family:'Liberation Sans',sans-serif;transform:scaleX(0.9550);transform-origin:0 0;">Intensive...</div>
<div class="t" style="left:1732.80px;top:107.78px;font-size:15.5px;color:#000;font-weight:bold;font-style:normal;font-family:'Liberation Sans',sans-serif;transform:scaleX(0.9219);transform-origin:0 0;">AaBbCcDc</div>
<div class="t" style="left:1756.04px;top:137.95px;font-size:15.3px;color:#605E5C;font-weight:normal;font-style:normal;font-family:'Liberation Sans',sans-serif;transform:scaleX(0.9578);transform-origin:0 0;">Fett</div>
<div class="t" style="left:1823.92px;top:107.78px;font-size:15.5px;color:#404040;font-weight:normal;font-style:italic;font-family:'Liberation Sans',sans-serif;transform:scaleX(0.9234);transform-origin:0 0;">AaBbCcDd</div>
<div class="t" style="left:1844.00px;top:137.95px;font-size:15.3px;color:#605E5C;font-weight:normal;font-style:normal;font-family:'Liberation Sans',sans-serif;transform:scaleX(1.0164);transform-origin:0 0;">Zitat</div>
<div class="t" style="left:1913.94px;top:107.78px;font-size:15.5px;color:#4472C4;font-weight:normal;font-style:italic;font-family:'Liberation Sans',sans-serif;transform:scaleX(0.9361);transform-origin:0 0;">AaBbCcDd</div>
<div class="t" style="left:1911.06px;top:137.95px;font-size:15.3px;color:#605E5C;font-weight:normal;font-style:normal;font-family:'Liberation Sans',sans-serif;transform:scaleX(0.9411);transform-origin:0 0;">Intensives...</div>
<div class="t" style="left:2003.00px;top:107.78px;font-size:15.5px;color:#595959;font-weight:normal;font-style:normal;font-family:'Liberation Sans',sans-serif;transform:scaleX(0.9901);transform-origin:0 0;">AᴀBʙCᴄDᴅ</div>
<div class="t" style="left:2002.60px;top:137.95px;font-size:15.3px;color:#605E5C;font-weight:normal;font-style:normal;font-family:'Liberation Sans',sans-serif;transform:scaleX(0.9065);transform-origin:0 0;">Schwache...</div>
<div class="t" style="left:2093.00px;top:107.78px;font-size:15.5px;color:#4472C4;font-weight:bold;font-style:normal;font-family:'Liberation Sans',sans-serif;transform:scaleX(0.9131);transform-origin:0 0;">AᴀBʙCᴄDᴅ</div>
<div class="t" style="left:2092.03px;top:137.95px;font-size:15.3px;color:#605E5C;font-weight:normal;font-style:normal;font-family:'Liberation Sans',sans-serif;transform:scaleX(0.9701);transform-origin:0 0;">Intensiver...</div>
<div class="t" style="left:1497.96px;top:183.91px;font-size:12.8px;color:#484848;font-weight:normal;font-style:normal;font-family:'Liberation Sans',sans-serif;transform:scaleX(1.0350);transform-origin:0 0;">Formatvorlagen</div>
<div class="t" style="left:2247.80px;top:90.95px;font-size:15.3px;color:#484848;font-weight:normal;font-style:normal;font-family:'Liberation Sans',sans-serif;transform:scaleX(0.8896);transform-origin:0 0;">Suchen</div>
<div class="t" style="left:2246.89px;top:120.25px;font-size:15.3px;color:#484848;font-weight:normal;font-style:normal;font-family:'Liberation Sans',sans-serif;transform:scaleX(0.9124);transform-origin:0 0;">Ersetzen</div>
<div class="t" style="left:2246.83px;top:148.85px;font-size:15.3px;color:#484848;font-weight:normal;font-style:normal;font-family:'Liberation Sans',sans-serif;transform:scaleX(0.9729);transform-origin:0 0;">Markieren</div>
<div class="t" style="left:2244.29px;top:183.76px;font-size:12.8px;color:#484848;font-weight:normal;font-style:normal;font-family:'Liberation Sans',sans-serif;transform:scaleX(1.0085);transform-origin:0 0;">Bearbeiten</div>
<div class="t" style="left:2357.60px;top:132.85px;font-size:15.3px;color:#484848;font-weight:normal;font-style:normal;font-family:'Liberation Sans',sans-serif;transform:scaleX(1.0042);transform-origin:0 0;">Diktieren</div>
<div class="t" style="left:2364.00px;top:183.76px;font-size:12.8px;color:#484848;font-weight:normal;font-style:normal;font-family:'Liberation Sans',sans-serif;transform:scaleX(0.9822);transform-origin:0 0;">Sprache</div>
<div class="t" style="left:2446.49px;top:132.85px;font-size:15.3px;color:#484848;font-weight:normal;font-style:normal;font-family:'Liberation Sans',sans-serif;transform:scaleX(1.0137);transform-origin:0 0;">Editor</div>
<div class="t" style="left:2447.16px;top:183.76px;font-size:12.8px;color:#484848;font-weight:normal;font-style:normal;font-family:'Liberation Sans',sans-serif;transform:scaleX(1.0402);transform-origin:0 0;">Editor</div>
<div class="t" style="left:9.40px;top:1370.90px;font-size:13px;color:#605E5C;font-weight:normal;font-style:normal;font-family:'Liberation Sans',sans-serif;transform:scaleX(0.9728);transform-origin:0 0;">Seite 1 von 1</div>
<div class="t" style="left:109.40px;top:1370.90px;font-size:13px;color:#605E5C;font-weight:normal;font-style:normal;font-family:'Liberation Sans',sans-serif;transform:scaleX(1.0136);transform-origin:0 0;">0 Wörter</div>
<div class="t" style="left:2135.90px;top:1371.20px;font-size:13px;color:#484848;font-weight:normal;font-style:normal;font-family:'Liberation Sans',sans-serif;transform:scaleX(0.8968);transform-origin:0 0;">Fokus</div>
<div class="t" style="left:2513.50px;top:1371.20px;font-size:13px;color:#605E5C;font-weight:normal;font-style:normal;font-family:'Liberation Sans',sans-serif;transform:scaleX(0.9303);transform-origin:0 0;">100 %</div>
</body></html>
